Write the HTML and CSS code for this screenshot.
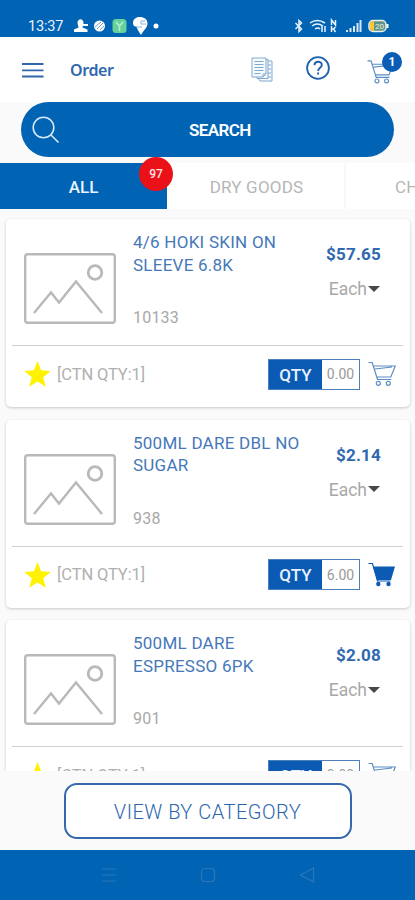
FILE: index.html
```html
<!DOCTYPE html>
<html lang="en">
<head>
<meta charset="utf-8">
<title>Order</title>
<link rel="stylesheet" href="styles.css">
</head>
<body>
<svg class="defs" aria-hidden="true">
  <symbol id="photo" viewBox="0 0 92 72"><g fill="none" stroke="#b9b9b9" stroke-width="2.4"><rect x="1.2" y="1.2" width="89.6" height="68.6" rx="2.5"/><circle cx="71" cy="19.500" r="6.800" stroke-width="2.8"/><path d="M10 60 27 39.500l8 10L52 28.500l26 31.500"/></g></symbol>
  <symbol id="star" viewBox="0 0 28 28"><path fill="#fff200" d="m14 .5 3.700 9.700 10 .6-7.800 6.500 2.700 10L14 21.800 5.400 27.300l2.700-10L.3 10.800l10-.6z"/></symbol>
  <symbol id="cart" viewBox="0 0 28 26"><g fill="none" stroke="#5b8cc2" stroke-width="1.200"><path d="M.5 1.500h3.700l5.300 17h13.800M5.500 5h21.800l-4.500 11H9M7 8l17-2"/><circle cx="10.300" cy="22.300" r="2"/><circle cx="20.300" cy="22.300" r="2"/></g></symbol>
  <symbol id="cart-full" viewBox="0 0 28 26"><path d="M.5 1.500h4L9.500 19h13" fill="none" stroke="#0b5bb5" stroke-width="1.200"/><path d="M5 4.500h22l-4 13.500H9z" fill="#0b5bb5"/><g fill="#0b5bb5"><circle cx="10.300" cy="22" r="2.200"/><circle cx="20.500" cy="22" r="2.200"/></g></symbol>
</svg>
<div class="screen">
  <div class="status">
    <span class="clock">13:37</span>
    <svg class="notices" width="90" height="20" viewBox="0 0 90 20">
      <g fill="#fff"><path d="M4.500 7c0-5 6-5 6 0 0 2-1 3-1 4.500l5 2V16H1v-2.500l4.500-2C5.500 10 4.500 9 4.500 7zM10 8h5v2h-5z"/><circle cx="26.500" cy="10" r="5.500"/><path d="M60 7c0-8 14.500-8 14.500.5 0 4-3.500 6-6.500 11.500-1.700-3-3.500-5-4.500-8.500C61 11 60 9 60 7z"/><circle cx="83" cy="10" r="2.500"/></g>
      <path d="m22 11 6-5m-4 7 6-6m-3 7 4-4" stroke="#6aa0d2"/>
      <rect x="39.500" y="3" width="14" height="14" rx="3.500" fill="#65d29b"/><path d="m43 6 3.500 4L50 6m-3.500 4v5" fill="none" stroke="#b7f0d0" stroke-width="1.500"/>
      <path d="M72 5h-4v3h5m-10 3h6" fill="none" stroke="#8ab6df"/>
    </svg>
    <svg class="signals" width="98" height="20" viewBox="0 0 98 20">
      <g fill="none" stroke="#e8f2fc" stroke-width="1.500"><path d="m2.500 7 6 6-2.500 2.500v-11L8.500 7l-6 6"/><path d="M17 7q7-5 15 0M19 10q5-4 11 0M22 13q3-2 5 0M29 10v6m3-6v6"/><path d="M38.500 9V4l4 5V4m-4 12v-6m0 3h2l2-2m-2 2 2 3"/></g>
      <path d="M53 14h2v2h-2zm3.500-2h2v4h-2zm3.500-2h2v6h-2zm3.500-3h2v9h-2zm3-3h2v12h-2z" fill="#d8e8f7"/>
      <rect x="76" y="4.500" width="17" height="11" rx="4" fill="#5f9488" stroke="#e9f0ee" stroke-width="1.500"/><path d="M77 7q2-2 4-2v10q-2 0-4-2z" fill="#ffc52e"/><path d="M94.500 8v4" stroke="#fff" stroke-width="2"/><text x="82" y="13" class="charge">20</text>
    </svg>
  </div>
  <header class="header">
    <svg class="menu" width="22" height="16" viewBox="0 0 22 16"><path d="M0 2h21.500M0 8.300h21.500M0 14.500h21.500" stroke="#3267ac" stroke-width="1.800"/></svg>
    <h1>Order</h1>
    <svg class="docs" width="22" height="25" viewBox="0 0 22 25"><g fill="#f7fafd" stroke="#7ea8d0" stroke-width="1"><path d="M7 4h14v20H9l-2-3z"/><path d="M4 2.500h13v19H6z"/><path d="M1 1h14v16l-3 3H1z"/><path d="M3.500 4.500h9m-9 3h9m-9 3h9m-9 3h9m-9 3h6M17 8h3m-3 4h3m-3 4h3m-3 4h3M12 20v-3h3" fill="none"/></g></svg>
    <svg class="help" width="24" height="24" viewBox="0 0 24 24"><g fill="none" stroke="#1d62ad"><circle cx="12" cy="12" r="10.900" stroke-width="1.800"/><path d="M8.500 9.200c0-4.500 7.300-4.500 7.300-.3 0 2.700-3.700 2.900-3.700 6" stroke-width="1.900"/><path d="M12.100 16.500v2" stroke-width="2"/></g></svg>
    <div class="basket"><svg width="27" height="26"><use href="#cart"/></svg><span class="count">1</span></div>
  </header>
  <div class="search">
    <svg width="28" height="28" viewBox="0 0 28 28"><g fill="none" stroke="#d9e8f8" stroke-width="1.600"><circle cx="11.500" cy="11.500" r="10.300"/><path d="m19 19 7.500 7.500"/></g></svg>
    <span>SEARCH</span>
  </div>
  <nav class="tabs">
    <div class="tab active"><span>ALL</span><span class="badge">97</span></div>
    <div class="tab"><span>DRY GOODS</span></div>
    <div class="tab last"><span>CH</span></div>
  </nav>
  <main class="list">
    <article class="card">
      <div class="info"><svg class="photo"><use href="#photo"/></svg>
        <div class="desc"><h2>4/6 HOKI SKIN ON<br>SLEEVE 6.8K</h2><p>10133</p></div>
        <div class="cost"><b>$57.65</b><span class="unit">Each<i></i></span></div></div>
      <div class="actions"><svg class="star"><use href="#star"/></svg><span class="ctn">[CTN QTY:1]</span><div class="qty"><b>QTY</b><span>0.00</span></div><svg class="cart"><use href="#cart"/></svg></div>
    </article>
    <article class="card">
      <div class="info"><svg class="photo"><use href="#photo"/></svg>
        <div class="desc"><h2>500ML DARE DBL NO<br>SUGAR</h2><p>938</p></div>
        <div class="cost"><b>$2.14</b><span class="unit">Each<i></i></span></div></div>
      <div class="actions"><svg class="star"><use href="#star"/></svg><span class="ctn">[CTN QTY:1]</span><div class="qty"><b>QTY</b><span>6.00</span></div><svg class="cart"><use href="#cart-full"/></svg></div>
    </article>
    <article class="card">
      <div class="info"><svg class="photo"><use href="#photo"/></svg>
        <div class="desc"><h2>500ML DARE<br>ESPRESSO 6PK</h2><p>901</p></div>
        <div class="cost"><b>$2.08</b><span class="unit">Each<i></i></span></div></div>
      <div class="actions"><svg class="star"><use href="#star"/></svg><span class="ctn">[CTN QTY:1]</span><div class="qty"><b>QTY</b><span>0.00</span></div><svg class="cart"><use href="#cart"/></svg></div>
    </article>
  </main>
  <div class="footer"><button>VIEW BY CATEGORY</button></div>
  <div class="navbar">
    <svg width="16" height="16" viewBox="0 0 16 16"><path d="M1 2h14M1 8h14M1 14h14"/></svg>
    <svg width="16" height="16" viewBox="0 0 16 16"><rect x="1.500" y="1.500" width="13" height="13" rx="3"/></svg>
    <svg width="16" height="16" viewBox="0 0 16 16"><path d="M14.500 1v14L1.500 8z"/></svg>
  </div>
</div>
</body>
</html>
```
FILE: styles.css
```css
* { box-sizing: border-box; }
body { margin: 0; font-family: Roboto, "Liberation Sans", sans-serif; background: #fafafa; }
h1, h2, p { margin: 0; }
svg { display: block; flex: none; }
.defs { position: absolute; width: 0; height: 0; }
.screen { width: 415px; height: 900px; display: flex; flex-direction: column; overflow: hidden; }
.status { flex: none; height: 37px; background: #0063b3; display: flex; align-items: center; padding: 15px 24px 0 28px; }
.clock { font-size: 14.500px; color: #eaf3fc; width: 45px; letter-spacing: -.2px; }
.signals { margin-left: auto; }
.charge { font-size: 8px; fill: #e8eee0; }
.header { flex: none; height: 65px; background: #fff; display: flex; align-items: center; padding: 0 15px 0 22px; }
.header h1 { margin-left: 26px; font-family: "Noto Sans", sans-serif; font-size: 16px; font-weight: 600; color: #2f68ae; letter-spacing: -.4px; }
.docs { margin-left: auto; }
.help { margin: -4px 37px 0 33px; }
.basket { position: relative; width: 33px; height: 31px; margin-top: -2px; padding-top: 6px; }
.count { position: absolute; left: 15px; top: -1px; width: 20px; height: 20px; border-radius: 50%; background: #0a5cb4; color: #fff; font-size: 12px; font-weight: 700; line-height: 20px; text-align: center; }
.search { flex: none; height: 55px; margin: 0 21px; border-radius: 28px; background: #0063b3; display: flex; align-items: center; padding-left: 11px; color: #fff; }
.search span { margin-left: 129px; font-size: 17px; font-weight: 600; letter-spacing: -.6px; }
.tabs { flex: none; height: 46px; margin-top: 6px; display: flex; background: #fff; color: #b6b6b6; font-size: 17px; }
.tab { position: relative; flex: none; width: 167px; display: flex; align-items: center; justify-content: center; padding-top: 2px; }
.tab + .tab { width: 179px; border-right: 2px solid #f8f8f8; padding-left: 2px; letter-spacing: .2px; }
.tab + .last { justify-content: flex-start; padding-left: 49px; border: 0; width: 69px; }
.tab.active { background: #0063b3; color: #eaf3ff; font-weight: 500; }
.badge { position: absolute; left: 139px; top: -6px; width: 34px; height: 34px; border-radius: 50%; background: #eb1118; color: #ffe6e6; font-size: 12px; line-height: 35px; text-align: center; z-index: 1; }
.list { flex: none; height: 562px; overflow: hidden; padding: 10px 5px 0 6px; }
.card { height: 188px; margin-bottom: 12.500px; background: #fff; border-radius: 5px; box-shadow: 0 1px 3px rgba(0,0,0,.2); padding: 0 7px 0 6px; }
.info { height: 127px; border-bottom: 1px solid #d0d0d0; display: flex; }
.photo { width: 92px; height: 72px; margin: 34px 0 0 12px; }
.desc { margin: 12px 0 0 17px; width: 180px; display: flex; flex-direction: column; }
.desc h2 { font-size: 17px; line-height: 22.500px; font-weight: 400; color: #4578b9; white-space: nowrap; letter-spacing: .25px; }
.desc p { margin-top: 32px; font-size: 16px; line-height: 20px; color: #a8a8a8; letter-spacing: .2px; }
.cost { margin: 25px 22px 0 auto; display: flex; flex-direction: column; align-items: flex-end; }
.cost b { font-size: 17px; line-height: 20px; font-weight: 700; color: #3069b0; letter-spacing: .2px; }
.unit { display: flex; align-items: center; margin-top: 15px; margin-right: 1px; font-size: 17.500px; line-height: 21px; color: #a8a8a8; }
.unit i { width: 0; height: 0; border: 6px solid transparent; border-top: 6px solid #484848; border-bottom: 0; margin: -2px 0 0 1px; }
.actions { height: 56px; display: flex; align-items: center; padding-left: 12px; }
.star { width: 27px; height: 28px; }
.ctn { margin: 0 0 0 6px; font-size: 16.500px; color: #b0b0b0; letter-spacing: -.1px; }
.qty { width: 92px; height: 31px; margin: 0 8px 0 auto; border: 1px solid #4b80bb; display: flex; align-items: center; text-align: center; }
.qty b { width: 53px; height: 29px; line-height: 30px; background: #0b5bb5; color: #e8f2ff; font-weight: 500; font-size: 17px; }
.qty span { flex: 1; font-size: 14px; color: #999; }
.cart { width: 28px; height: 26px; margin-right: 7px; }
.footer { flex: none; height: 79px; display: flex; justify-content: center; align-items: flex-start; padding-top: 12px; background: #fafafa; }
.footer button { width: 288px; height: 56px; padding: 2px 0 0; border: 2px solid #3569ae; border-radius: 13px; background: #fff; font: 300 20px Roboto, sans-serif; color: #2c66ad; letter-spacing: .5px; }
.navbar { flex: none; height: 50px; background: #0063b3; display: flex; justify-content: center; align-items: center; gap: 83px; }
.navbar svg { fill: none; stroke: #2a78ba; stroke-width: 1.200; }
```
